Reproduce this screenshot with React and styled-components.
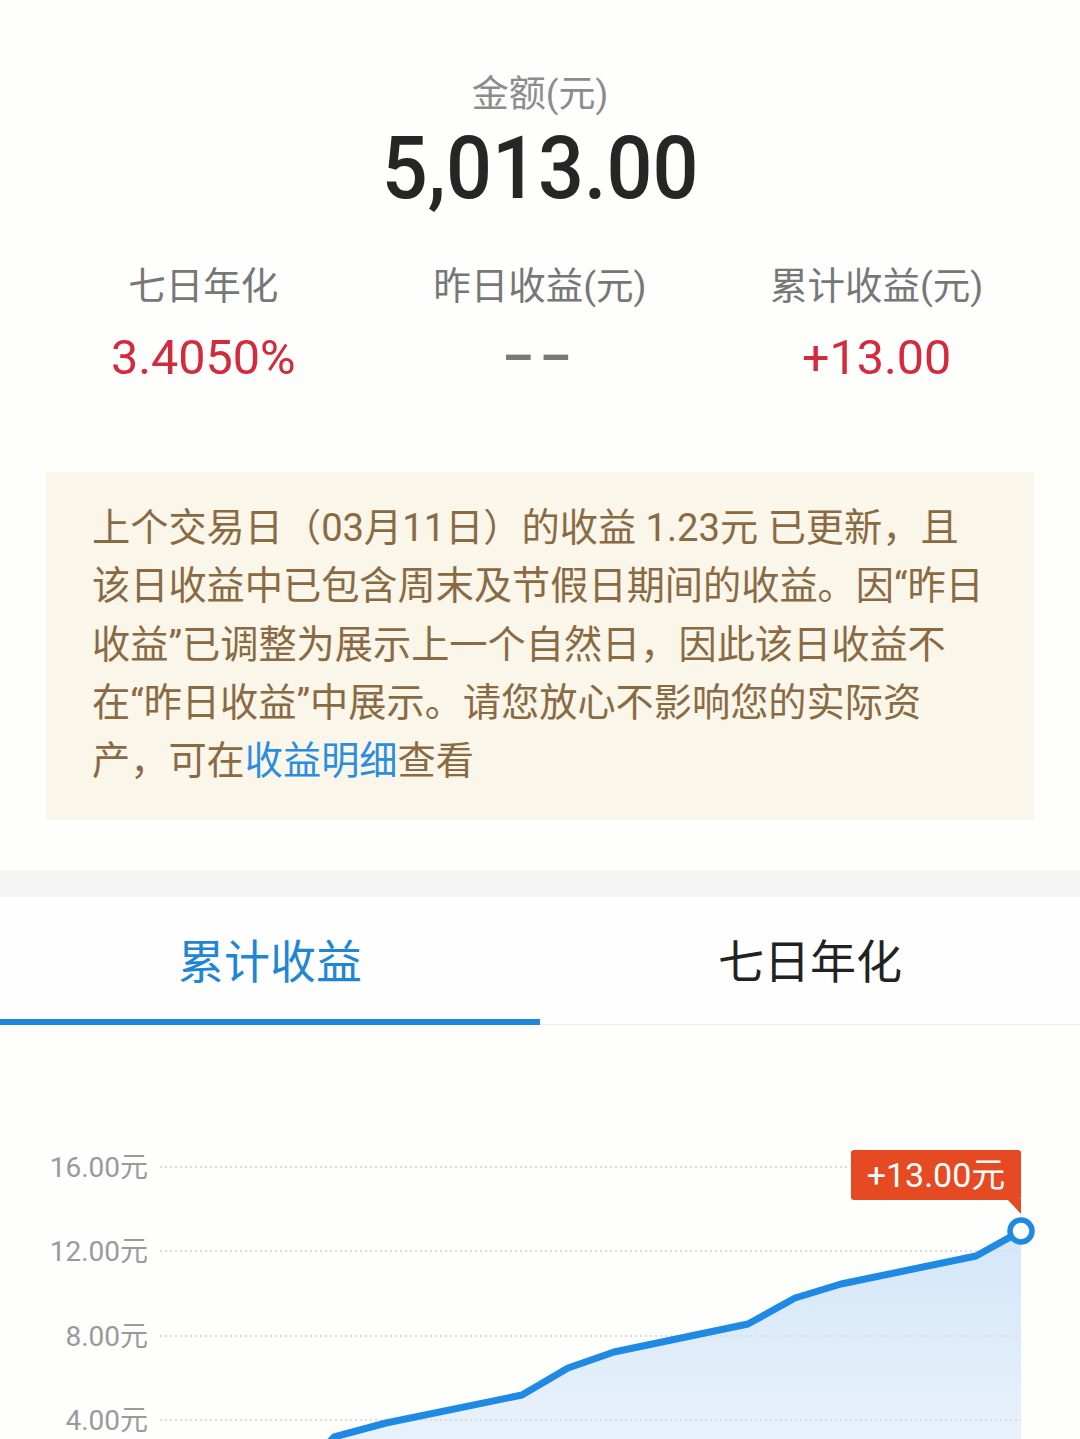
import React from 'react'
import styled, { createGlobalStyle } from 'styled-components'

const GlobalStyle = createGlobalStyle`
    html, body {
        margin: 0;
        padding: 0;
        background: #fefefd;
    }
    body {
        font-family: Roboto, "Noto Sans CJK SC", sans-serif;
        overflow: hidden;
    }
`

const Page = styled.main`
    width: 1080px;
    height: 1439px;
    overflow: hidden;
    background: #fefefd;
`

const Summary = styled.section`
    display: flex;
    flex-direction: column;
    align-items: center;
    padding-top: 70px;
`

const Caption = styled.div`
    font-size: 37px;
    line-height: 50px;
    color: #8c8c8c;
`

const Amount = styled.div`
    font-size: 88px;
    font-weight: 500;
    line-height: 96px;
    color: #262626;
    transform: scaleX(0.92);
`

const Stats = styled.div`
    align-self: stretch;
    display: grid;
    grid-template-columns: repeat(3, 1fr);
    padding: 45px 35px 0;
`

const Stat = styled.div`
    display: flex;
    flex-direction: column;
    align-items: center;
    gap: 17px;
`

const StatLabel = styled.div`
    font-size: 37.5px;
    line-height: 50px;
    color: #777;
`

const StatValue = styled.div`
    font-size: 48.5px;
    line-height: 60px;
    color: ${p => (p.$muted ? '#7a7a7a' : '#d42a3c')};
    font-weight: ${p => (p.$muted ? 700 : 400)};
    letter-spacing: ${p => (p.$muted ? '7px' : '0')};
`

const Notice = styled.p`
    margin: 84px 46px 0;
    padding: 27px 30px 30px 46px;
    background: #fbf6ea;
    color: #8a6a42;
    font-size: 38.2px;
    line-height: 58.3px;
    white-space: nowrap;
`

const Link = styled.span`
    color: #2a8ee0;
`

const Band = styled.div`
    margin-top: 50px;
    height: 27px;
    background: #f5f5f5;
`

const Tabs = styled.nav`
    display: grid;
    grid-template-columns: 1fr 1fr;
    background: #fefefe;
    border-bottom: 1px solid #eeeeee;
`

const Tab = styled.div`
    height: 128px;
    margin-bottom: -1px;
    display: flex;
    align-items: center;
    justify-content: center;
    box-sizing: border-box;
    font-size: 46px;
    color: ${p => (p.$active ? '#1f86d6' : '#222')};
    border-bottom: 6px solid ${p => (p.$active ? '#2386d8' : 'transparent')};
`

const ChartBox = styled.section`
    height: 414px;
`

const gridLines = [
    { y: 142, label: '16.00元' },
    { y: 226, label: '12.00元' },
    { y: 311, label: '8.00元' },
    { y: 395, label: '4.00元' },
]

const points = [
    [290, 460],
    [334, 412],
    [386, 398],
    [522, 370],
    [568, 343],
    [614, 327],
    [748, 299],
    [795, 273],
    [841, 259],
    [976, 231],
    [1021, 206],
]

const Chart = () => {
    const line = points.map(([x, y]) => `${x},${y}`).join(' ')
    const area = `${line} 1021,470 290,470`

    return (
        <ChartBox>
            <svg width="1080" height="414" viewBox="0 0 1080 414">
                <defs>
                    <linearGradient id="fill" x1="0" y1="0" x2="0" y2="1">
                        <stop offset="0%" stopColor="#d3e6f8" />
                        <stop offset="100%" stopColor="#eef5fc" />
                    </linearGradient>
                </defs>
                <polygon points={area} fill="url(#fill)" />
                {gridLines.map(({ y, label }) => (
                    <g key={label}>
                        <line
                            x1="160"
                            x2="1021"
                            y1={y}
                            y2={y}
                            stroke="#dcdcdc"
                            strokeWidth="2"
                            strokeDasharray="2 3"
                        />
                        <text
                            x="148"
                            y={y + 10}
                            textAnchor="end"
                            fontSize="28"
                            fill="#9a9a9a"
                            fontFamily='Roboto, "Noto Sans CJK SC", sans-serif'
                        >
                            {label}
                        </text>
                    </g>
                ))}
                <polyline
                    points={line}
                    fill="none"
                    stroke="#1f8ae3"
                    strokeWidth="7"
                    strokeLinejoin="round"
                    strokeLinecap="round"
                />
                <circle cx="1021" cy="206" r="11" fill="#fff" stroke="#1f8ae3" strokeWidth="5.5" />
                <rect x="851" y="125" width="170" height="50" rx="3" fill="#e64a22" />
                <polygon points="1007,174 1021,174 1021,189" fill="#e64a22" />
                <text
                    x="936"
                    y="162"
                    textAnchor="middle"
                    fontSize="34"
                    fill="#fff"
                    fontFamily='Roboto, "Noto Sans CJK SC", sans-serif'
                >
                    +13.00元
                </text>
            </svg>
        </ChartBox>
    )
}

export default function App() {
    return (
        <Page>
            <GlobalStyle />
            <Summary>
                <Caption>金额(元)</Caption>
                <Amount>5,013.00</Amount>
                <Stats>
                    <Stat>
                        <StatLabel>七日年化</StatLabel>
                        <StatValue>3.4050%</StatValue>
                    </Stat>
                    <Stat>
                        <StatLabel>昨日收益(元)</StatLabel>
                        <StatValue $muted>––</StatValue>
                    </Stat>
                    <Stat>
                        <StatLabel>累计收益(元)</StatLabel>
                        <StatValue>+13.00</StatValue>
                    </Stat>
                </Stats>
            </Summary>
            <Notice>
                上个交易日（03月11日）的收益 1.23元 已更新，且
                <br />
                该日收益中已包含周末及节假日期间的收益。因“昨日
                <br />
                收益”已调整为展示上一个自然日，因此该日收益不
                <br />
                在“昨日收益”中展示。请您放心不影响您的实际资
                <br />
                产，可在<Link>收益明细</Link>查看
            </Notice>
            <Band />
            <Tabs>
                <Tab $active>累计收益</Tab>
                <Tab>七日年化</Tab>
            </Tabs>
            <Chart />
        </Page>
    )
}
